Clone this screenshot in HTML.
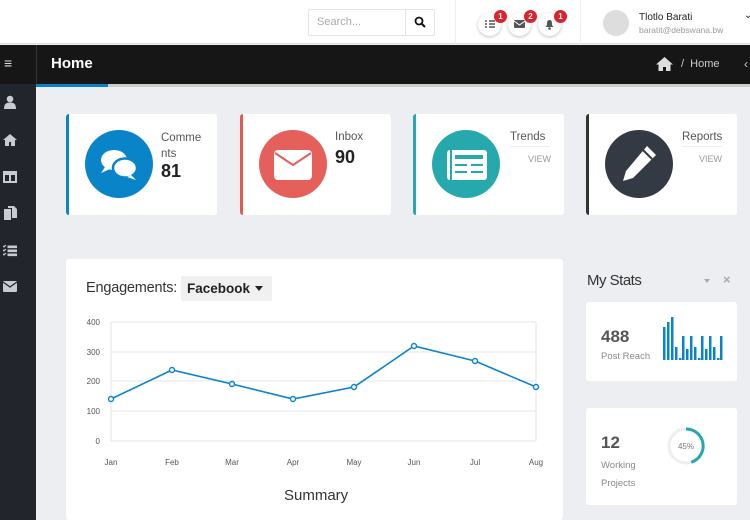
<!DOCTYPE html>
<html><head><meta charset="utf-8"><style>
*{margin:0;padding:0;box-sizing:border-box}
body{width:750px;height:520px;overflow:hidden;background:#eceef1;font-family:"Liberation Sans",sans-serif;position:relative;color:#333}
.a{position:absolute}
.card{position:absolute;top:114px;width:151px;height:101px;background:#fff;border-radius:3px}
.circ{position:absolute;left:16px;top:16px;width:68px;height:68px;border-radius:50%}
.lbl{position:absolute;font-size:11.5px;color:#555}
.badge{position:absolute;width:13px;height:13px;border-radius:50%;background:#d9232d;color:#fff;font-size:8px;font-weight:bold;text-align:center;line-height:13px}
.ib{position:absolute;top:13px;width:23px;height:23px;border-radius:50%;background:#fff;box-shadow:0 1px 3px rgba(0,0,0,.25)}
.sb{position:absolute;left:3px;width:14px;fill:#c8cbd0}
</style></head><body>
<div class="a" style="left:0;top:0;width:750px;height:44px;background:#fff;border-bottom:1px solid #ddd"></div>
<div class="a" style="left:455px;top:0;width:1px;height:44px;background:#eee"></div>
<div class="a" style="left:580px;top:0;width:1px;height:44px;background:#eee"></div>
<div class="a" style="left:308px;top:9px;width:127px;height:27px;border:1px solid #e3e3e3;border-radius:2px"></div>
<div class="a" style="left:405px;top:9px;width:1px;height:27px;background:#e3e3e3"></div>
<div class="a" style="left:317px;top:16px;font-size:11px;color:#aaa">Search...</div>
<svg class="a" style="left:414px;top:16px" width="12" height="12" viewBox="0 0 12 12"><circle cx="5" cy="5" r="3.5" fill="none" stroke="#111" stroke-width="1.8"/><path d="M7.5 7.5L11 11" stroke="#111" stroke-width="2"/></svg>
<div class="ib" style="left:478px"></div><div class="ib" style="left:508px"></div><div class="ib" style="left:538px"></div>
<svg class="a" style="left:484px;top:19px" width="11" height="10"><path d="M1 2h2M5 2h6M1 5h2M5 5h6M1 8h2M5 8h6" stroke="#555" stroke-width="1.5"/></svg>
<svg class="a" style="left:514px;top:20px" width="11" height="9"><rect width="11" height="8" rx="1" fill="#555"/><path d="M0 1l5.5 4L11 1" stroke="#fff" fill="none"/></svg>
<svg class="a" style="left:544px;top:19px" width="11" height="11"><path d="M5.5 1C3 1 3 3 3 6L1.5 8h8L8 6C8 3 8 1 5.5 1z" fill="#555"/><circle cx="5.5" cy="9.5" r="1.3" fill="#555"/></svg>
<div class="badge" style="left:494px;top:10px">1</div><div class="badge" style="left:524px;top:10px">2</div><div class="badge" style="left:554px;top:10px">1</div>
<div class="a" style="left:603px;top:10px;width:26px;height:26px;border-radius:50%;background:#ddd"></div>
<div class="a" style="left:639px;top:12px;font-size:10px;color:#222">Tlotlo Barati</div>
<div class="a" style="left:639px;top:25px;font-size:8.5px;color:#999">baratit@debswana.bw</div>
<div class="a" style="left:744px;top:10px;font-size:10px;color:#222">&#8964;</div>
<div class="a" style="left:0;top:45px;width:750px;height:39px;background:#161616"></div>
<div class="a" style="left:36px;top:45px;width:1px;height:39px;background:#333"></div>
<div class="a" style="left:4px;top:55px;font-size:14px;color:#ddd">&#8801;</div>
<div class="a" style="left:51px;top:55px;font-size:15px;color:#fff;font-weight:bold">Home</div>
<svg class="a" style="left:655px;top:56px" width="19" height="16" viewBox="0 0 19 16"><path d="M9.5 1L1 8.5h2.5V15h4.5v-4h3v4h4.5V8.5H18z" fill="#ddd"/></svg>
<div class="a" style="left:681px;top:58px;font-size:11px;color:#ccc">/ &nbsp;Home</div>
<div class="a" style="left:744px;top:57px;font-size:12px;color:#ccc">&lsaquo;</div>
<div class="a" style="left:36px;top:84px;width:714px;height:3px;background:#ccc"></div>
<div class="a" style="left:36px;top:84px;width:72px;height:3px;background:#0a7fcc"></div>
<div class="a" style="left:0;top:84px;width:36px;height:436px;background:#22252b"></div>
<svg class="sb" style="top:95px" height="14" viewBox="0 0 14 14"><circle cx="7" cy="4" r="3.3"/><path d="M1 14c0-5 2-6.5 6-6.5s6 1.5 6 6.5z"/></svg>
<svg class="sb" style="top:133px" height="13" viewBox="0 0 14 13"><path d="M7 1L0 7h2v6h4V9h2v4h4V7h2z"/></svg>
<svg class="sb" style="top:170px" height="13" viewBox="0 0 14 13"><path d="M0 1h14v12H0z M2 5v6h4V5z M8 5v6h4V5z" fill-rule="evenodd"/></svg>
<svg class="sb" style="top:206px" height="14" viewBox="0 0 14 14"><path d="M1 3h7v11H1z"/><path d="M5 0h6l3 3v9H9V2H5z"/></svg>
<svg class="sb" style="top:244px" height="13" viewBox="0 0 14 13"><path d="M5 2h9v1.6H5zM5 6h9v1.6H5zM5 10h9v1.6H5zM0 2l1 1 2-2M0 6l1 1 2-2M0 10l1 1 2-2" stroke="#c8cbd0" stroke-width="1"/></svg>
<svg class="sb" style="top:281px" height="11" viewBox="0 0 14 11"><rect width="14" height="11" rx="1"/><path d="M0 1l7 5 7-5" stroke="#22252b" fill="none" stroke-width="1.3"/></svg>
<div class="card" style="left:66px;border-left:3px solid #0a84c9">
<div class="circ" style="background:#0a84c9"><svg width="68" height="68" viewBox="0 0 68 68"><ellipse cx="29" cy="30" rx="13" ry="10" fill="#fff"/><path d="M20 37l-4 6 9-4z" fill="#fff"/><ellipse cx="40" cy="38" rx="12" ry="9.5" fill="#fff" stroke="#0a84c9" stroke-width="2.5"/><path d="M46 45l5 5-9-3z" fill="#fff"/></svg></div>
<div class="lbl" style="left:92px;top:16px;line-height:16px">Comme<br>nts</div>
<div class="a" style="left:92px;top:47px;font-size:18px;font-weight:bold;color:#222">81</div></div>
<div class="card" style="left:240px;border-left:3px solid #e05a4e">
<div class="circ" style="background:#e5605a"><svg width="68" height="68" viewBox="0 0 68 68"><rect x="15" y="20" width="38" height="30" rx="4" fill="#fff"/><path d="M16 23l18 12 18-12" stroke="#e5605a" stroke-width="2" fill="none"/></svg></div>
<div class="lbl" style="left:92px;top:17px">Inbox</div>
<div class="a" style="left:92px;top:33px;font-size:18px;font-weight:bold;color:#222">90</div></div>
<div class="card" style="left:413px;border-left:3px solid #26a9a8">
<div class="circ" style="background:#26a9ad"><svg width="68" height="68" viewBox="0 0 68 68"><rect x="15" y="20" width="40" height="30" rx="3" fill="#fff"/><path d="M19 20v30" stroke="#26a9ad" stroke-width="2"/><rect x="23" y="25" width="28" height="4" fill="#26a9ad"/><path d="M23 35h12M39 35h12M23 42h12M39 42h12" stroke="#26a9ad" stroke-width="2"/></svg></div>
<div class="lbl" style="left:94px;top:17px;border-bottom:1px solid #eee;padding-bottom:3px;width:40px">Trends</div>
<div class="a" style="left:112px;top:40px;font-size:9px;color:#999">VIEW</div></div>
<div class="card" style="left:586px;border-left:3px solid #333">
<div class="circ" style="background:#343a43"><svg width="68" height="68" viewBox="0 0 68 68"><path d="M42 16l9 9-23 23-10 3 3-10z" fill="#fff"/><path d="M38 20l9 9" stroke="#343a43" stroke-width="2"/></svg></div>
<div class="lbl" style="left:93px;top:17px;border-bottom:1px solid #eee;padding-bottom:3px;width:40px">Reports</div>
<div class="a" style="left:110px;top:40px;font-size:9px;color:#999">VIEW</div></div>
<div class="a" style="left:66px;top:259px;width:497px;height:261px;background:#fff;border-radius:3px"></div>
<div class="a" style="left:86px;top:280px;font-size:14.5px;color:#333;letter-spacing:-0.2px">Engagements:</div>
<div class="a" style="left:181px;top:276px;width:91px;height:25px;background:#f0f0f0;border-radius:2px"></div>
<div class="a" style="left:187px;top:281px;font-size:13.5px;font-weight:bold;color:#222">Facebook</div>
<div class="a" style="left:255px;top:286px;width:0;height:0;border-left:4px solid transparent;border-right:4px solid transparent;border-top:5px solid #222"></div>
<svg class="a" style="left:66px;top:310px" width="497" height="160" viewBox="66 310 497 160" font-family="Liberation Sans" font-size="8" fill="#555">
<g stroke="#e4e4e4" stroke-width="1"><path d="M111 322H536M111 352H536M111 381H536M111 411H536M111 441H536M111 322V441M536 322V441"/></g>
<text x="100" y="325" text-anchor="end">400</text><text x="100" y="355" text-anchor="end">300</text><text x="100" y="384" text-anchor="end">200</text><text x="100" y="414" text-anchor="end">100</text><text x="100" y="444" text-anchor="end">0</text>
<g text-anchor="middle"><text x="111" y="465">Jan</text><text x="172" y="465">Feb</text><text x="232" y="465">Mar</text><text x="293" y="465">Apr</text><text x="354" y="465">May</text><text x="414" y="465">Jun</text><text x="475" y="465">Jul</text><text x="536" y="465">Aug</text></g>
<polyline points="111,399 172,370 232,384 293,399 354,387 414,346 475,361 536,387" fill="none" stroke="#0a84c9" stroke-width="1.6"/>
<g fill="#fff" stroke="#0a84c9" stroke-width="1.4"><circle cx="111" cy="399" r="2.5"/><circle cx="172" cy="370" r="2.5"/><circle cx="232" cy="384" r="2.5"/><circle cx="293" cy="399" r="2.5"/><circle cx="354" cy="387" r="2.5"/><circle cx="414" cy="346" r="2.5"/><circle cx="475" cy="361" r="2.5"/><circle cx="536" cy="387" r="2.5"/></g>
</svg>
<div class="a" style="left:284px;top:487px;font-size:15px;color:#333">Summary</div>
<div class="a" style="left:587px;top:272px;font-size:15px;color:#333;letter-spacing:-0.5px">My Stats</div>
<div class="a" style="left:704px;top:279px;width:0;height:0;border-left:3px solid transparent;border-right:3px solid transparent;border-top:4px solid #aaa"></div>
<div class="a" style="left:723px;top:272px;font-size:13px;color:#aaa;font-weight:bold">×</div>
<div class="a" style="left:586px;top:302px;width:151px;height:79px;background:#fff;border-radius:3px"></div>
<div class="a" style="left:601px;top:327px;font-size:17px;font-weight:bold;color:#555">488</div>
<div class="a" style="left:601px;top:351px;font-size:9.5px;color:#888">Post Reach</div>
<svg class="a" style="left:663px;top:317px" width="60" height="44"><g fill="#0a84c9"><rect x="0" y="10" width="2.5" height="33"/><rect x="4" y="5" width="2.5" height="38"/><rect x="8" y="0" width="2.5" height="43"/><rect x="12" y="30" width="2.5" height="13"/><rect x="16" y="41" width="2.5" height="2"/><rect x="19" y="19" width="2.5" height="24"/><rect x="23" y="32" width="2.5" height="11"/><rect x="27" y="19" width="2.5" height="24"/><rect x="31" y="30" width="2.5" height="13"/><rect x="35" y="41" width="2.5" height="2"/><rect x="38" y="19" width="2.5" height="24"/><rect x="42" y="32" width="2.5" height="11"/><rect x="46" y="19" width="2.5" height="24"/><rect x="50" y="30" width="2.5" height="13"/><rect x="54" y="41" width="2.5" height="2"/><rect x="57" y="19" width="2.5" height="24"/></g></svg>
<div class="a" style="left:586px;top:408px;width:151px;height:97px;background:#fff;border-radius:3px"></div>
<div class="a" style="left:601px;top:433px;font-size:17px;font-weight:bold;color:#555">12</div>
<div class="a" style="left:601px;top:457px;font-size:9.5px;color:#888;line-height:18px">Working<br>Projects</div>
<svg class="a" style="left:666px;top:426px" width="40" height="40" viewBox="0 0 40 40"><circle cx="20" cy="20" r="17" fill="none" stroke="#eee" stroke-width="3"/><path d="M20 3A17 17 0 0 1 25.3 36.2" fill="none" stroke="#26a9ad" stroke-width="3"/><text x="20" y="23" font-size="8" text-anchor="middle" fill="#777" font-family="Liberation Sans">45%</text></svg>
</body></html>
